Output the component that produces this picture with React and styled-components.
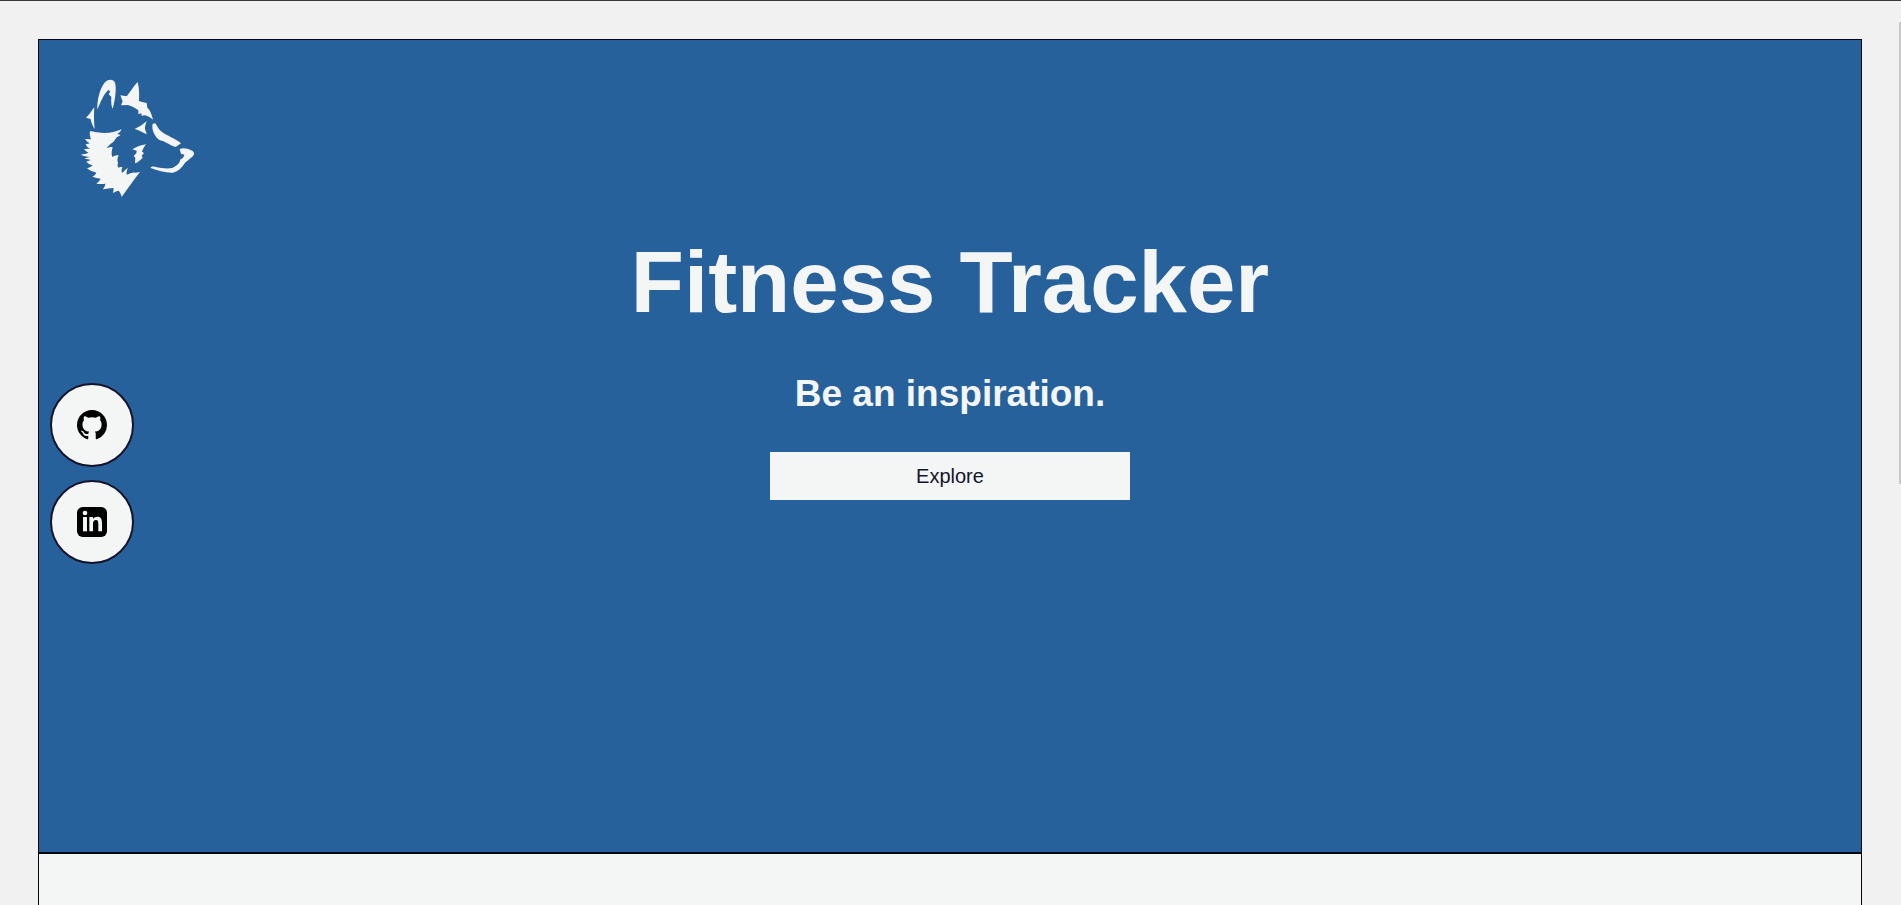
import React from "react";
import styled, { createGlobalStyle } from "styled-components";
import { BsGithub } from "react-icons/bs";

const GlobalStyle = createGlobalStyle`
  *, *::before, *::after { box-sizing: border-box; }
  body {
    margin: 0;
    background: #f1f1f1;
    color: #f4f6f6;
    font-family: Arial, "Liberation Sans", sans-serif;
  }
`;

const Page = styled.div`
  display: flex;
  flex-direction: column;
  min-height: 100vh;
  padding: 38px 39px 0 38px;
  border-top: 1px solid #38343a;
`;

const Frame = styled.main`
  flex: 1;
  display: flex;
  flex-direction: column;
  border: 1px solid #05060f;
  border-bottom: 0;
`;

const Hero = styled.header`
  display: flex;
  flex-direction: column;
  min-height: calc(100vh - 91px);
  padding: 30px 31px;
  background: #26619b;
  border-bottom: 2px solid #05060f;
`;

const LogoLink = styled.a`
  display: block;
  width: 140px;
  height: 136px;
  color: #f4f6f6;

  svg {
    display: block;
    width: 100%;
    height: 100%;
  }
`;

const Intro = styled.div`
  display: flex;
  flex-direction: column;
  align-items: center;
  padding-top: 26px;
`;

const Title = styled.h1`
  margin: 0;
  font-size: 87px;
  line-height: 100px;
  text-align: center;
`;

const Tagline = styled.h2`
  margin: 40px 0 36px;
  font-size: 37px;
  line-height: 44px;
  text-align: center;
`;

const ExploreButton = styled.button`
  width: 360px;
  max-width: 100%;
  height: 48px;
  border: 0;
  background: #f4f6f6;
  color: #14142b;
  font-family: inherit;
  font-size: 20px;
  cursor: pointer;
`;

const Content = styled.section`
  flex: 1;
  background: #f4f6f6;
`;

const SocialNav = styled.nav`
  position: fixed;
  top: 383px;
  left: 50px;
  display: flex;
  flex-direction: column;
  gap: 13px;
`;

const SocialLink = styled.a`
  display: flex;
  align-items: center;
  justify-content: center;
  width: 84px;
  height: 84px;
  border: 2px solid #14142b;
  border-radius: 50%;
  background: #f4f6f6;
  color: #000;

  svg {
    width: 30px;
    height: 30px;
  }
`;

const ScrollThumb = styled.div`
  position: fixed;
  top: 22px;
  right: 0;
  width: 2px;
  height: 51vh;
  background: #c8c8c8;
`;

const WolfLogo = () => (
  <svg viewBox="0 0 420 408" fill="currentColor" aria-hidden="true">
    <path d="M82 119C81 91 88 60 103 39C112 27 130 25 135 38C140 53 136 88 128 116C124 109 123 94 124 80L116 73L121 64L115 60C101 72 93 94 82 119Z" />
    <path d="M151 76L170 79C181 66 191 48 203 36C208 54 208 77 207 93L219 97L230 99L232 113C240 119 246 135 249 149C242 143 234 139 225 136L215 137L214 130L205 132L205 121C197 115 185 108 174 105L153 106L158 94Z" />
    <path d="M73 112C71 134 72 158 74 177C68 168 63 157 62 147L48 143C57 136 64 123 73 112Z" />
    <path d="M194 177C207 171 220 162 230 153C227 162 224 170 225 178C227 184 230 189 230 193C220 188 207 180 194 177Z" />
    <path d="M248 161L256 160C261 168 266 178 273 184C291 198 316 205 333 220L317 231C302 226 290 219 279 213C266 211 258 203 251 188C247 178 246 170 248 161Z" />
    <path d="M329 237C341 232 356 236 368 243C374 249 374 254 365 262L345 278C337 292 325 303 309 308C286 309 263 301 242 294C242 291 247 289 254 290C273 294 291 297 307 294C322 286 331 277 330 269C338 265 343 259 343 254L333 251Z" />
    <path d="M187 238C200 230 213 225 228 223C222 231 218 239 216 245L222 249L215 257L218 263C211 270 204 277 195 280L196 263L191 258L199 250L200 242Z" />
    <path d="M60 184C68 182 73 186 82 187C107 192 132 188 155 178C152 185 147 189 142 192L152 195C143 201 139 202 136 207C131 216 127 219 122 221C117 227 112 231 108 235C115 232 122 230 128 231C126 240 123 251 127 261C134 257 140 256 146 256C142 264 141 270 144 278C142 284 143 289 145 293C149 291 153 291 157 292C155 298 154 303 156 309C162 304 167 298 174 294C170 302 169 307 170 314C180 310 189 306 195 308C199 308 204 307 210 306C191 330 174 354 155 381C154 374 150 367 146 362C141 363 135 365 129 369C130 364 131 359 131 354C119 355 110 356 98 358C103 353 105 347 106 341C98 342 89 342 79 341C85 336 90 331 92 326C84 325 75 323 67 320C73 317 77 313 79 308C69 305 59 302 51 295C58 293 64 290 68 286C60 284 54 280 49 275L62 270C56 268 49 268 43 265L60 261C50 260 41 258 33 254C41 252 49 251 55 248C49 245 45 241 42 237L60 236C53 233 49 228 47 223L60 220C53 217 49 212 45 207L63 208C60 200 58 192 60 184Z" />
  </svg>
);

const LinkedinLogo = () => (
  <svg viewBox="0 0 90 90" aria-hidden="true">
    <rect width="90" height="90" rx="17" fill="currentColor" />
    <g fill="#f4f6f6">
      <circle cx="24" cy="18" r="7" />
      <rect x="18" y="30" width="12" height="43" />
      <path d="M37 30H48V36C51 31 56 29 61 29C72 29 75 37 75 48V73H64V51C64 44 63 39 57 39C51 39 48 43 48 50V73H37Z" />
    </g>
  </svg>
);

export default function App() {
  return (
    <>
      <GlobalStyle />
      <Page>
        <Frame>
          <Hero>
            <LogoLink href="#" aria-label="Home">
              <WolfLogo />
            </LogoLink>
            <Intro>
              <Title>Fitness Tracker</Title>
              <Tagline>Be an inspiration.</Tagline>
              <ExploreButton type="button">Explore</ExploreButton>
            </Intro>
          </Hero>
          <Content />
        </Frame>
        <SocialNav aria-label="Social links">
          <SocialLink href="#" aria-label="GitHub">
            <BsGithub />
          </SocialLink>
          <SocialLink href="#" aria-label="LinkedIn">
            <LinkedinLogo />
          </SocialLink>
        </SocialNav>
        <ScrollThumb aria-hidden="true" />
      </Page>
    </>
  );
}
